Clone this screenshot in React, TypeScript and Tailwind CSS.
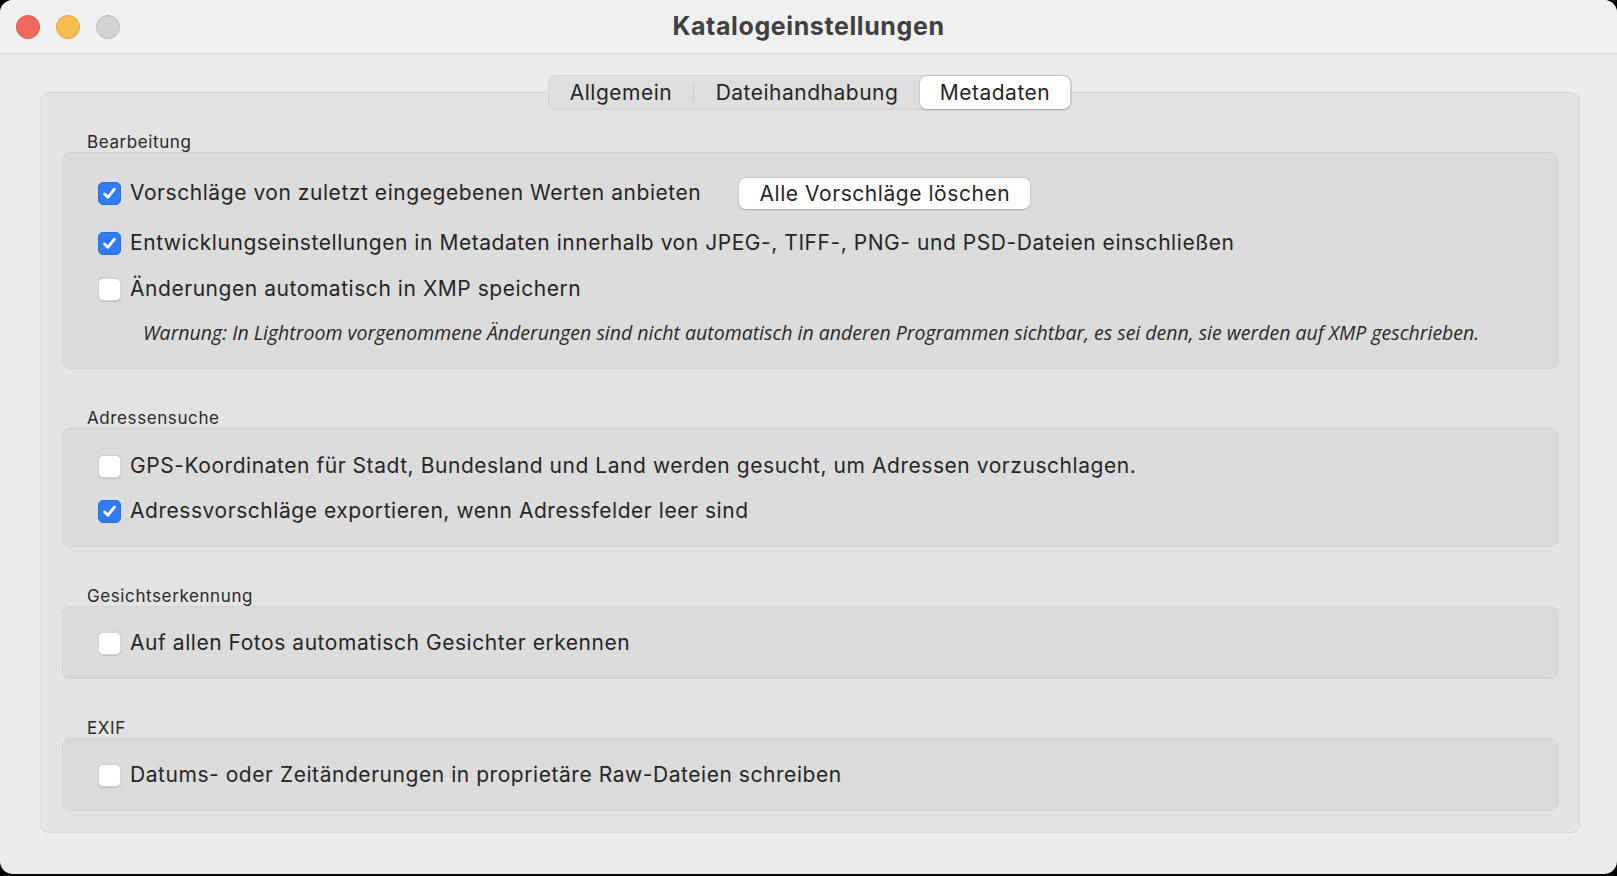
import React from "react";

function Check({ checked }: { checked: boolean }) {
  if (checked) {
    return (
      <div className="w-[23px] h-[23px] rounded-[5px] bg-[#2f7cf6] border border-[#2a6fe0] flex items-center justify-center shrink-0">
        <svg width="17" height="17" viewBox="0 0 16 16" fill="none">
          <path d="M3.4 8.4 L6.5 11.6 L12.6 3.9" stroke="white" strokeWidth="2.7" strokeLinecap="round" strokeLinejoin="round" />
        </svg>
      </div>
    );
  }
  return (
    <div className="w-[23px] h-[23px] rounded-[5px] bg-white border border-[#d3d3d3] shadow-[0_0.5px_1px_rgba(0,0,0,0.12)] shrink-0" />
  );
}

function Row({ checked, label, children, className = "" }: { checked: boolean; label: string; children?: React.ReactNode; className?: string }) {
  return (
    <div className={`flex items-center h-[30px] pl-[35px] ${className}`}>
      <Check checked={checked} />
      <span className="ml-[9px] text-[21px] text-[#262626] tracking-[0.55px] whitespace-nowrap">{label}</span>
      {children}
    </div>
  );
}

function Section({ title, children, className = "" }: { title: string; children: React.ReactNode; className?: string }) {
  return (
    <div className={className}>
      <div className="h-[24px] leading-[28px] pl-[25px] text-[17px] tracking-[0.6px] text-[#2a2a2a]">{title}</div>
      <div className="rounded-[8px] bg-[#dcdcdc] border border-[#d3d3d3]">{children}</div>
    </div>
  );
}

export default function App() {
  return (
    <div className="w-[1617px] h-[876px] bg-black [font-family:Inter,'Noto_Sans',sans-serif]">
      <div className="w-[1617px] h-[874px] rounded-[13px] overflow-hidden bg-[#ececec] flex flex-col">
        {/* Title bar */}
        <div className="relative h-[54px] shrink-0 bg-[#f0f0f0] border-b border-[#d2d2d2] flex items-center">
          <div className="flex items-center gap-[16px] pl-[16px]">
            <div className="w-[24px] h-[24px] rounded-full bg-[#ee6a5e] border border-[#d6574b]" />
            <div className="w-[24px] h-[24px] rounded-full bg-[#f5bd4f] border border-[#d9a23c]" />
            <div className="w-[24px] h-[24px] rounded-full bg-[#d4d4d4] border border-[#bfbfbf]" />
          </div>
          <div className="absolute inset-0 flex items-center justify-center pointer-events-none">
            <span className="text-[25px] font-bold text-[#3f3f3f] tracking-[0.6px]">Katalogeinstellungen</span>
          </div>
        </div>

        {/* Body */}
        <div className="flex-1 pt-[38px] pl-[40px] pr-[37px]">
          <div className="relative rounded-[8px] bg-[#e3e3e3] border border-[#d9d9d9] pt-[35px] px-[21px] pb-[21px]">
            {/* Tabs */}
            <div className="absolute left-1/2 -translate-x-1/2 -top-[18px] h-[35px] w-[524px] rounded-[8px] bg-[#dfdfdf] border border-[#d2d2d2] flex items-center text-[21px] tracking-[0.5px] text-[#262626]">
              <div className="w-[144px] h-full flex items-center justify-center">Allgemein</div>
              <div className="w-px h-[16px] bg-[#c8c8c8]" />
              <div className="w-[226px] h-full flex items-center justify-center">Dateihandhabung</div>
              <div className="flex-1 h-[33px] mr-[1px] rounded-[7px] bg-white shadow-[0_0.5px_2px_rgba(0,0,0,0.25)] flex items-center justify-center">Metadaten</div>
            </div>

            <Section title="Bearbeitung">
              <div className="pt-[25px] pb-[23px]">
                <Row checked={true} label="Vorschläge von zuletzt eingegebenen Werten anbieten">
                  <button className="ml-[38px] h-[31px] w-[291px] rounded-[7px] bg-white shadow-[0_0.5px_2px_rgba(0,0,0,0.25)] text-[21px] text-[#262626] tracking-[0.55px]">
                    Alle Vorschläge löschen
                  </button>
                </Row>
                <Row className="mt-[20px]" checked={true} label="Entwicklungseinstellungen in Metadaten innerhalb von JPEG-, TIFF-, PNG- und PSD-Dateien einschließen" />
                <Row className="mt-[16px]" checked={false} label="Änderungen automatisch in XMP speichern" />
                <div className="mt-[17px] h-[24px] leading-[24px] pl-[80px] italic text-[19.5px] text-[#2a2a2a] whitespace-nowrap [font-family:'Open_Sans',sans-serif]">
                  Warnung: In Lightroom vorgenommene Änderungen sind nicht automatisch in anderen Programmen sichtbar, es sei denn, sie werden auf XMP geschrieben.
                </div>
              </div>
            </Section>

            <Section title="Adressensuche" className="mt-[35px]">
              <div className="pt-[22px] pb-[20px]">
                <Row checked={false} label="GPS-Koordinaten für Stadt, Bundesland und Land werden gesucht, um Adressen vorzuschlagen." />
                <Row className="mt-[15px]" checked={true} label="Adressvorschläge exportieren, wenn Adressfelder leer sind" />
              </div>
            </Section>

            <Section title="Gesichtserkennung" className="mt-[35px]">
              <div className="pt-[21px] pb-[20px]">
                <Row checked={false} label="Auf allen Fotos automatisch Gesichter erkennen" />
              </div>
            </Section>

            <Section title="EXIF" className="mt-[35px]">
              <div className="pt-[21px] pb-[20px]">
                <Row checked={false} label="Datums- oder Zeitänderungen in proprietäre Raw-Dateien schreiben" />
              </div>
            </Section>
          </div>
        </div>
      </div>
    </div>
  );
}
